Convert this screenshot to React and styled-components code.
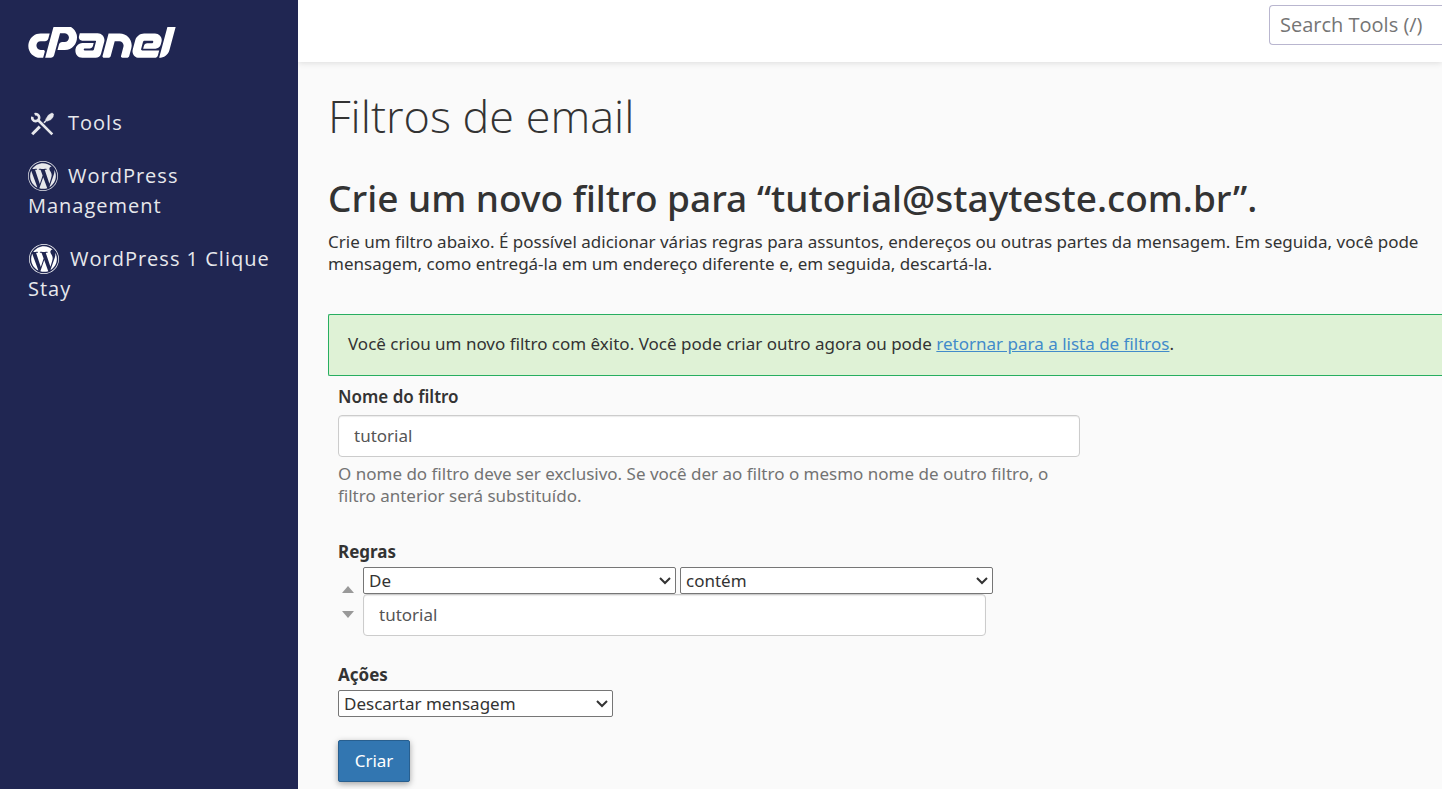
import React from "react";
import styled, { createGlobalStyle } from "styled-components";
import { FaCpanel, FaWordpress } from "react-icons/fa";

const GlobalStyle = createGlobalStyle`
  * {
    box-sizing: border-box;
  }

  body {
    margin: 0;
    background-color: #fafafa;
    color: #333333;
    font-family: "Noto Sans", "Open Sans", sans-serif;
    font-size: 17px;
    line-height: 22px;
  }
`;

const Page = styled.div`
  display: flex;
  min-height: 100vh;
`;

const Sidebar = styled.aside`
  flex: 0 0 298px;
  padding: 27px 28px;
  background-color: #202652;
  font-family: "Open Sans", sans-serif;
`;

const Logo = styled(FaCpanel)`
  display: block;
  width: 148px;
  height: 32px;
  color: #ffffff;
`;

const Menu = styled.nav`
  display: flex;
  flex-direction: column;
  gap: 23px;
  margin-top: 49px;
`;

const MenuLink = styled.a`
  color: #e7e8ec;
  font-size: 20px;
  line-height: 30px;
  letter-spacing: 1px;
  text-decoration: none;

  svg {
    width: ${(props) => (props.$bright ? "32px" : "30px")};
    height: 30px;
    margin-right: 10px;
    vertical-align: top;
    color: ${(props) => (props.$bright ? "#ffffff" : "#e7e8ec")};
  }
`;

const Content = styled.div`
  flex: 1;
  min-width: 0;
  overflow: hidden;
`;

const Header = styled.header`
  display: flex;
  justify-content: flex-end;
  height: 62px;
  padding-top: 5px;
  background-color: #ffffff;
  box-shadow: 0 1px 6px rgba(0, 0, 0, 0.12);
`;

const Search = styled.input`
  width: 173px;
  height: 40px;
  padding: 0 10px 2px;
  border: 1px solid #b9b6cf;
  border-right: none;
  border-radius: 4px 0 0 4px;
  background-color: #ffffff;
  font-family: "Open Sans", sans-serif;
  font-size: 20px;

  &::placeholder {
    color: #757575;
  }
`;

const Main = styled.main`
  padding: 29px 0 0 30px;
`;

const Title = styled.h1`
  margin: 0;
  font-family: "Open Sans", sans-serif;
  font-size: 45px;
  font-weight: 300;
  line-height: 50px;
`;

const Subtitle = styled.h2`
  margin: 32px 0 8px;
  font-size: 37px;
  font-weight: 500;
  line-height: 50px;
`;

const Desc = styled.p`
  margin: 0;
  white-space: nowrap;
`;

const Alert = styled.div`
  margin-top: 39px;
  padding: 18px 19px 20px;
  border: 1px solid #27ae60;
  border-right: none;
  border-radius: 2px 0 0 2px;
  background-color: #dff2d6;

  a {
    color: #428bca;
  }
`;

const Form = styled.form`
  max-width: 762px;
  padding: 10px;
`;

const Label = styled.label`
  display: block;
  margin-bottom: 7px;
  font-weight: 600;
`;

const GroupTitle = styled.h3`
  margin: ${(props) => props.$top} 0 4px;
  font-size: 17px;
  font-weight: 700;
  line-height: 22px;
`;

const TextInput = styled.input`
  display: block;
  width: 100%;
  max-width: ${(props) => props.$max || "none"};
  height: 42px;
  padding: 0 15px 2px;
  border: 1px solid #cccccc;
  border-radius: 4px;
  background-color: #ffffff;
  box-shadow: inset 0 1px 1px rgba(0, 0, 0, 0.08);
  color: #555555;
  font-family: inherit;
  font-size: 17px;
`;

const Help = styled.p`
  margin: 6px 0 0;
  color: #737373;
`;

const Rule = styled.div`
  display: flex;
  align-items: center;
  gap: 5px;
`;

const Arrows = styled.div`
  display: flex;
  flex-direction: column;
  gap: 3px;
`;

const ArrowButton = styled.button`
  display: flex;
  align-items: center;
  justify-content: center;
  width: 20px;
  height: 22px;
  padding: 0;
  border: none;
  background: none;
  color: #999999;
`;

const RuleFields = styled.div`
  flex: 1;
`;

const SelectRow = styled.div`
  display: flex;
  gap: 4px;
`;

const SelectBox = styled.div`
  position: relative;
  width: ${(props) => props.$width};

  svg {
    position: absolute;
    top: 9px;
    right: 5px;
    pointer-events: none;
  }
`;

const Dropdown = styled.select`
  display: block;
  width: 100%;
  height: 27px;
  padding: 0 20px 0 5px;
  border: 1px solid #767676;
  border-radius: 2px;
  background-color: #ffffff;
  color: #333333;
  font-family: inherit;
  font-size: 17px;
  appearance: none;
`;

const Submit = styled.button`
  min-width: 72px;
  height: 42px;
  margin-top: 23px;
  padding: 0 15px 2px;
  border: 1px solid #285f8f;
  border-radius: 2px;
  background-color: #3276b1;
  box-shadow: 0 2px 6px rgba(0, 0, 0, 0.35);
  color: #ffffff;
  font-family: inherit;
  font-size: 17px;
`;

const ToolsIcon = () => (
  <svg viewBox="0 0 30 30" fill="none" stroke="currentColor" aria-hidden="true">
    <path d="M10 12L24.300 26.300" strokeWidth="2.600" />
    <path d="M4.200 26.200L11.800 18.600" strokeWidth="3" />
    <path d="M16 14.800L20 10.800" strokeWidth="1.600" />
    <path
      d="M17.600 11.500L20.500 7L24 5L25.500 6L25 9L23 11.500L19.400 13Z"
      fill="currentColor"
      strokeWidth="0.600"
    />
    <path d="M6.600 6.300A3.500 3.500 0 1 1 4.300 8.800" strokeWidth="2.600" />
  </svg>
);

const Select = ({ width, label, value }) => (
  <SelectBox $width={width}>
    <Dropdown aria-label={label} defaultValue={value}>
      <option>{value}</option>
    </Dropdown>
    <svg width="12" height="9" viewBox="0 0 12 9" fill="none">
      <path d="M1 2L6 7L11 2" stroke="#333333" strokeWidth="2" />
    </svg>
  </SelectBox>
);

function App() {
  return (
    <>
      <GlobalStyle />
      <Page>
        <Sidebar>
          <Logo viewBox="0 186 640 139" title="cPanel" />
          <Menu>
            <MenuLink href="#tools">
              <ToolsIcon />
              Tools
            </MenuLink>
            <MenuLink href="#wordpress">
              <FaWordpress viewBox="8 8 496 496" />
              WordPress Management
            </MenuLink>
            <MenuLink href="#wordpress-stay" $bright>
              <FaWordpress viewBox="8 8 496 496" />
              WordPress 1 Clique Stay
            </MenuLink>
          </Menu>
        </Sidebar>
        <Content>
          <Header>
            <Search
              type="text"
              aria-label="Search Tools"
              placeholder="Search Tools (/)"
            />
          </Header>
          <Main>
            <Title>Filtros de email</Title>
            <Subtitle>
              Crie um novo filtro para “tutorial@stayteste.com.br”.
            </Subtitle>
            <Desc>
              Crie um filtro abaixo. É possível adicionar várias regras para
              assuntos, endereços ou outras partes da mensagem. Em seguida, você
              pode
              <br />
              mensagem, como entregá-la em um endereço diferente e, em seguida,
              descartá-la.
            </Desc>
            <Alert>
              Você criou um novo filtro com êxito. Você pode criar outro agora
              ou pode <a href="#filtros">retornar para a lista de filtros</a>.
            </Alert>
            <Form>
              <Label htmlFor="nome">Nome do filtro</Label>
              <TextInput id="nome" type="text" defaultValue="tutorial" />
              <Help>
                O nome do filtro deve ser exclusivo. Se você der ao filtro o
                mesmo nome de outro filtro, o filtro anterior será substituído.
              </Help>
              <GroupTitle $top="34px">Regras</GroupTitle>
              <Rule>
                <Arrows>
                  <ArrowButton type="button" aria-label="Subir">
                    <svg width="12" height="7" viewBox="0 0 12 7">
                      <path d="M0 7L6 0L12 7Z" fill="currentColor" />
                    </svg>
                  </ArrowButton>
                  <ArrowButton type="button" aria-label="Descer">
                    <svg width="12" height="7" viewBox="0 0 12 7">
                      <path d="M0 0L6 7L12 0Z" fill="currentColor" />
                    </svg>
                  </ArrowButton>
                </Arrows>
                <RuleFields>
                  <SelectRow>
                    <Select width="313px" label="Campo" value="De" />
                    <Select width="313px" label="Operador" value="contém" />
                  </SelectRow>
                  <TextInput
                    type="text"
                    aria-label="Valor"
                    defaultValue="tutorial"
                    $max="623px"
                  />
                </RuleFields>
              </Rule>
              <GroupTitle $top="28px">Ações</GroupTitle>
              <Select width="275px" label="Ações" value="Descartar mensagem" />
              <Submit type="button">Criar</Submit>
            </Form>
          </Main>
        </Content>
      </Page>
    </>
  );
}

export default App;
